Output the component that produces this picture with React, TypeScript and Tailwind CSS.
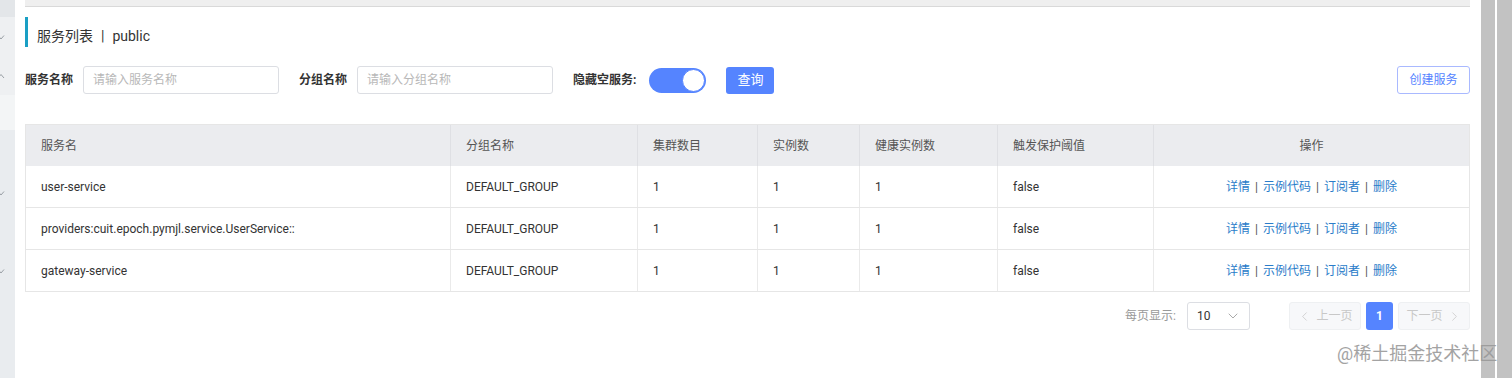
import { ChevronDown, ChevronLeft, ChevronRight } from "lucide-react";

const font = "font-['Roboto','Noto_Sans_CJK_SC',sans-serif]";

const columns = [
  { label: "服务名", width: "w-[425px]" },
  { label: "分组名称", width: "w-[187px]" },
  { label: "集群数目", width: "w-[120px]" },
  { label: "实例数", width: "w-[102px]" },
  { label: "健康实例数", width: "w-[138px]" },
  { label: "触发保护阈值", width: "w-[156px]" },
];

const services = [
  { name: "user-service", group: "DEFAULT_GROUP", clusters: 1, instances: 1, healthy: 1, threshold: "false" },
  {
    name: "providers:cuit.epoch.pymjl.service.UserService::",
    group: "DEFAULT_GROUP",
    clusters: 1,
    instances: 1,
    healthy: 1,
    threshold: "false",
  },
  { name: "gateway-service", group: "DEFAULT_GROUP", clusters: 1, instances: 1, healthy: 1, threshold: "false" },
];

function SideMark({ up }: { up?: boolean }) {
  return (
    <svg width="8" height="6" viewBox="0 0 8 6" className="text-[#9aa0a6]" aria-hidden>
      <path
        d={up ? "M1 5 L4 1.5 L7 5" : "M1 1.5 L4 5 L7 1.5"}
        fill="none"
        stroke="currentColor"
        strokeWidth="1"
      />
    </svg>
  );
}

function Sidebar() {
  return (
    <div className="flex w-[15px] shrink-0 flex-col">
      <div className="h-[17px] bg-[#e3e6e9]" />
      <div className="flex h-[78px] flex-col bg-[#eef0f2]">
        <div className="mt-[17px] -ml-[3px]">
          <SideMark />
        </div>
        <div className="mt-[33px] -ml-[3px]">
          <SideMark up />
        </div>
      </div>
      <div className="h-[35px] bg-[#f3f5f6]" />
      <div className="flex flex-1 flex-col bg-[#e9ecef]">
        <div className="mt-[60px] -ml-[3px]">
          <SideMark />
        </div>
        <div className="mt-[72px] -ml-[3px]">
          <SideMark />
        </div>
      </div>
    </div>
  );
}

function Field({ label, placeholder }: { label: string; placeholder: string }) {
  return (
    <div className="flex items-center gap-[10px]">
      <span className="text-[12px] font-bold text-[#333]">{label}</span>
      <div className="flex h-[28px] w-[196px] items-center rounded-[3px] border border-[#dcdee3] pl-[9px] text-[12px] text-[#b8b8b8]">
        {placeholder}
      </div>
    </div>
  );
}

function Actions() {
  const links = ["详情", "示例代码", "订阅者", "删除"];
  return (
    <span className="inline-flex items-center text-[12px] text-[#2a7cc9]">
      {links.map((link, i) => (
        <span key={link} className="inline-flex items-center">
          {i > 0 ? <span className="mx-[5px] text-[#555]">|</span> : null}
          {link}
        </span>
      ))}
    </span>
  );
}

function ServiceTable() {
  return (
    <div className="mt-[30px] border border-[#e6e6e6] text-[12px] text-[#333]">
      <div className="flex h-[41px] bg-[#ebecef] text-[#555]">
        {columns.map((col) => (
          <div
            key={col.label}
            className={`${col.width} flex shrink-0 items-center border-r border-[#dfe0e4] pl-[15px]`}
          >
            {col.label}
          </div>
        ))}
        <div className="flex flex-1 items-center justify-center">操作</div>
      </div>
      {services.map((s, i) => (
        <div
          key={s.name}
          className={`flex ${i < services.length - 1 ? "h-[42px] border-b border-[#e6e6e6]" : "h-[41px]"}`}
        >
          {[s.name, s.group, s.clusters, s.instances, s.healthy, s.threshold].map((v, j) => (
            <div
              key={j}
              className={`${columns[j].width} flex shrink-0 items-center border-r border-[#eaeaea] pl-[15px]`}
            >
              {v}
            </div>
          ))}
          <div className="flex flex-1 items-center justify-center">
            <Actions />
          </div>
        </div>
      ))}
    </div>
  );
}

function Pagination() {
  return (
    <div className="mt-[10px] flex h-[28px] items-center justify-end text-[12px]">
      <span className="text-[#999]">每页显示:</span>
      <div className="ml-[11px] flex h-[28px] w-[63px] items-center justify-between rounded-[3px] border border-[#dcdee3] pl-[9px] pr-[8px] text-[#333]">
        <span>10</span>
        <ChevronDown size={16} strokeWidth={1.25} className="text-[#999]" />
      </div>
      <div className="ml-[39px] flex h-[28px] w-[72px] items-center justify-center gap-[4px] rounded-[3px] border border-[#eef0f2] bg-[#f7f8fa] text-[#c8c8c8]">
        <ChevronLeft size={15} strokeWidth={1.25} />
        上一页
      </div>
      <div className="ml-[5px] flex h-[28px] w-[27px] items-center justify-center rounded-[3px] bg-[#5584ff] font-bold text-white">
        1
      </div>
      <div className="ml-[5px] flex h-[28px] w-[72px] items-center justify-center gap-[4px] rounded-[3px] border border-[#eef0f2] bg-[#f7f8fa] text-[#c8c8c8]">
        下一页
        <ChevronRight size={15} strokeWidth={1.25} />
      </div>
    </div>
  );
}

export default function App() {
  return (
    <div className={`relative flex h-[378px] w-[1512px] overflow-hidden bg-white ${font}`}>
      <Sidebar />
      <div className="w-[1455px] shrink-0 pl-[10px]">
        <div className="h-[7px] border-b border-[#d9d9d9] bg-[#efefef]" />
        <div className="mt-[10px] flex h-[30px] items-center border-l-[3px] border-[#1a9fc4] pl-[9px] pt-[8px] text-[14px] text-[#333]">
          服务列表
          <span className="mx-[8px]">|</span>
          public
        </div>
        <div className="mt-[19px] flex h-[28px] items-center">
          <Field label="服务名称" placeholder="请输入服务名称" />
          <div className="ml-[20px]">
            <Field label="分组名称" placeholder="请输入分组名称" />
          </div>
          <span className="ml-[20px] text-[12px] font-bold text-[#333]">隐藏空服务:</span>
          <div className="ml-[13px] flex h-[25px] w-[57px] items-center justify-end rounded-full bg-[#5584ff] pr-[1px]">
            <div className="h-[23px] w-[23px] rounded-full border border-[#5584ff] bg-white" />
          </div>
          <div className="ml-[20px] flex h-[27px] w-[48px] items-center justify-center rounded-[3px] bg-[#5584ff] text-[13px] text-white">
            查询
          </div>
          <div className="ml-auto flex h-[28px] w-[73px] items-center justify-center rounded-[3px] border border-[#a9b9ff] text-[12px] text-[#5584ff]">
            创建服务
          </div>
        </div>
        <ServiceTable />
        <Pagination />
      </div>
      <div className="w-[11px] shrink-0" />
      <div className="w-[14px] shrink-0 bg-[#c2c2c2]" />
      <div className="w-[2px] shrink-0" />
      <div className="w-[15px] shrink-0 bg-[#c2c2c2]" />
      <div className="absolute left-[1337px] top-[340px] text-[18px] text-[#9a9a9a] opacity-90">
        @稀土掘金技术社区
      </div>
    </div>
  );
}
